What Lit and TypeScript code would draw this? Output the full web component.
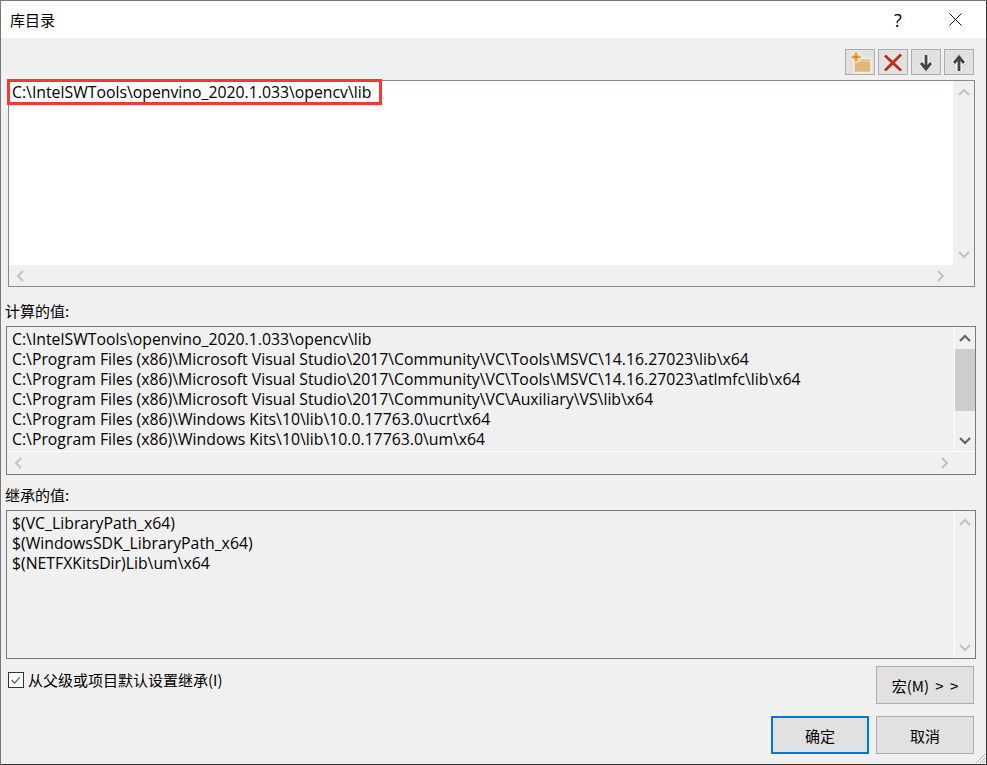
import { LitElement, html, css, svg } from "lit";
import { customElement } from "lit/decorators.js";

const chev = (dir: string, dark = false) => {
  const pts: Record<string, string> = {
    up: "1,7 6,2 11,7",
    down: "1,2 6,7 11,2",
    left: "7,1 2,6 7,11",
    right: "2,1 7,6 2,11",
  };
  const h = dir === "up" || dir === "down";
  return html`<svg class="chev" width=${h ? 12 : 9} height=${h ? 9 : 12} viewBox=${h ? "0 0 12 9" : "0 0 9 12"}>
    <polyline points=${pts[dir]} fill="none" stroke=${dark ? "#606060" : "#c2c2c2"} stroke-width="2"></polyline>
  </svg>`;
};

const computed = [
  "C:\\IntelSWTools\\openvino_2020.1.033\\opencv\\lib",
  "C:\\Program Files (x86)\\Microsoft Visual Studio\\2017\\Community\\VC\\Tools\\MSVC\\14.16.27023\\lib\\x64",
  "C:\\Program Files (x86)\\Microsoft Visual Studio\\2017\\Community\\VC\\Tools\\MSVC\\14.16.27023\\atlmfc\\lib\\x64",
  "C:\\Program Files (x86)\\Microsoft Visual Studio\\2017\\Community\\VC\\Auxiliary\\VS\\lib\\x64",
  "C:\\Program Files (x86)\\Windows Kits\\10\\lib\\10.0.17763.0\\ucrt\\x64",
  "C:\\Program Files (x86)\\Windows Kits\\10\\lib\\10.0.17763.0\\um\\x64",
];
const inherited = ["$(VC_LibraryPath_x64)", "$(WindowsSDK_LibraryPath_x64)", "$(NETFXKitsDir)Lib\\um\\x64"];

@customElement("app-root")
export class AppRoot extends LitElement {
  static styles = css`
    :host {
      display: block;
      width: 987px;
      height: 765px;
      font-family: "Open Sans", "Noto Sans CJK SC", sans-serif;
      font-size: 15.8px;
      color: #000;
    }
    .window {
      box-sizing: border-box;
      position: relative;
      width: 987px;
      height: 765px;
      display: flex;
      flex-direction: column;
      border: 1px solid #777;
      border-right-color: #333;
      border-bottom-color: #333;
      background: #f0f0f0;
    }
    .title {
      height: 37px;
      flex: none;
      background: #fff;
      display: flex;
      align-items: center;
      padding-left: 9px;
      font-family: "Noto Sans CJK SC", sans-serif;
      font-size: 15px;
    }
    .title .name { flex: 1; }
    .help { width: 14px; text-align: center; margin-right: 44px; font-family: "Open Sans", sans-serif; font-size: 18px; }
    .close { display: block; margin-right: 24px; }
    .body { flex: 1; display: flex; flex-direction: column; padding: 11px 5px 0; position: relative; }
    .toolbar { display: flex; justify-content: flex-end; gap: 3px; height: 26px; padding-right: 7px; flex: none; }
    .tbtn {
      box-sizing: border-box;
      width: 30px;
      height: 26px;
      background: #e1e1e1;
      border: 1px solid #adadad;
    }
    .tbtn svg { display: block; }
    .panel {
      box-sizing: border-box;
      border: 1px solid #7a7a7a;
      display: grid;
      flex: none;
      position: relative;
      line-height: 20px;
      white-space: nowrap;
    }
    .edit { margin: 5px 0 0 2px; width: 967px; height: 207px; grid-template-columns: 944px 1fr; grid-template-rows: 184px 1fr; border-color: #84888f; }
    .edit .content { background: #fff; padding: 1px 3px; }
    .list { width: 970px; height: 149px; grid-template-columns: 948px 1fr; }
    .list .content { padding: 2px 5px; overflow: hidden; }
    .computed { grid-template-rows: 125px 1fr; }
    .computed .content { border-right: 1px solid #fff; border-bottom: 1px solid #fff; }
    .computed .vbar { border-bottom: 1px solid #fff; }
    .inherited { grid-template-rows: 1fr; }
    .inherited .content { border-right: 1px solid #fff; }
    .row { height: 20px; }
    .vbar { display: flex; flex-direction: column; min-height: 0; }
    .vbtn { height: 22px; flex: none; display: flex; align-items: center; justify-content: center; }
    .track { flex: 1; min-height: 0; }
    .thumb { height: 62px; background: #cdcdcd; }
    .hbar { display: flex; justify-content: space-between; align-items: center; padding: 0 7px; }
    .edit .hbar { padding: 0 8px 0 7px; }
    .computed .hbar { padding: 0 6px 0 7px; }
    .label { flex: none; display: flex; align-items: flex-end; padding-bottom: 5px; margin-left: -1px; box-sizing: border-box; font-family: "Noto Sans CJK SC", sans-serif; font-size: 15px; }
    .label.l1 { height: 39px; }
    .label.l2 { height: 35px; }
    .footer { display: flex; align-items: flex-start; justify-content: space-between; padding: 7px 7px 0 2px; height: 57px; box-sizing: border-box; flex: none; }
    .check { display: flex; align-items: center; gap: 4px; margin-top: 6px; font-family: "Noto Sans CJK SC", sans-serif; font-size: 15px; line-height: 16px; }
    .box { box-sizing: border-box; width: 16px; height: 16px; border: 1px solid #333; background: #fff; display: block; }
    .btn {
      box-sizing: border-box;
      width: 98px;
      height: 38px;
      background: #e1e1e1;
      border: 1px solid #adadad;
      display: flex;
      align-items: center;
      justify-content: center;
      font-family: "Noto Sans CJK SC", sans-serif;
      font-size: 15px;
      word-spacing: 3px;
    }
    .actions { display: flex; justify-content: flex-end; gap: 7px; padding-right: 7px; }
    .btn.primary { border: 2px solid #0078d7; }
    .redbox { position: absolute; left: -2px; top: -2px; width: 375px; height: 26px; box-sizing: border-box; border: 3px solid #f33; pointer-events: none; }
    .grip { position: absolute; right: 0; bottom: 0; display: block; }
    .chev { display: block; }
  `;

  private vbar(dark: boolean, thumb = false) {
    return html`<div class="vbar">
      <div class="vbtn">${chev("up", dark)}</div>
      <div class="track">${thumb ? html`<div class="thumb"></div>` : ""}</div>
      <div class="vbtn">${chev("down", dark)}</div>
    </div>`;
  }

  private hbar() {
    return html`<div class="hbar">${chev("left")}${chev("right")}</div>`;
  }

  render() {
    return html`<div class="window">
      <div class="title">
        <span class="name">库目录</span>
        <span class="help">?</span>
        <svg class="close" width="13" height="13" viewBox="0 0 13 13">
          <path d="M.5.5l12 12M12.5.5l-12 12" stroke="#111" stroke-width="1" fill="none"></path>
        </svg>
      </div>
      <div class="body">
        <div class="toolbar">
          <div class="tbtn">
            <svg width="28" height="24" viewBox="0 0 28 24">
              <path d="M8 9.500h2l1-1h14v14H8z" fill="#dfb878" stroke="#f7f1e4" stroke-width="1.400"></path>
              <path d="M14 11h10" stroke="#efd9ae" stroke-width="1"></path>
              <circle cx="10" cy="7" r="5.500" fill="#f6efe0"></circle>
              <g fill="#eb9f3c">
                <circle cx="10" cy="4" r="1.800"></circle><circle cx="10" cy="10" r="1.800"></circle>
                <circle cx="7" cy="7" r="1.800"></circle><circle cx="13" cy="7" r="1.800"></circle>
              </g>
              <circle cx="10" cy="7" r="1.800" fill="#d07a1e"></circle>
            </svg>
          </div>
          <div class="tbtn">
            <svg width="28" height="24" viewBox="0 0 28 24">
              <path d="M6 5.500l16 15M22 4.500L6 20.500" stroke="#f5e8e4" stroke-width="6" fill="none"></path>
              <path d="M6 5.500l16 15M22 4.500L6 20.500" stroke="#b5331c" stroke-width="3" fill="none"></path>
            </svg>
          </div>
          <div class="tbtn">
            <svg width="28" height="24" viewBox="0 0 28 24">
              <path d="M10 4h8v7l4 1v4l-8 6-8-6v-4l4-1z" fill="#f2f2f2" stroke="#cfcfcf" stroke-width=".8"></path>
              <path d="M14 5v14M9 13l5 6 5-6" stroke="#454545" stroke-width="2.800" fill="none"></path>
            </svg>
          </div>
          <div class="tbtn">
            <svg width="28" height="24" viewBox="0 0 28 24">
              <path d="M10 22h8v-7l4-1v-4l-8-6-8 6v4l4 1z" fill="#f2f2f2" stroke="#cfcfcf" stroke-width=".8"></path>
              <path d="M14 21V7M9 13l5-6 5 6" stroke="#454545" stroke-width="2.800" fill="none"></path>
            </svg>
          </div>
        </div>

        <div class="panel edit">
          <div class="content">${computed[0]}</div>
          ${this.vbar(false)}
          ${this.hbar()}
          <div></div>
          <div class="redbox"></div>
        </div>

        <div class="label l1">计算的值:</div>
        <div class="panel list computed">
          <div class="content">${computed.map((t) => html`<div class="row">${t}</div>`)}</div>
          ${this.vbar(true, true)}
          ${this.hbar()}
          <div></div>
        </div>

        <div class="label l2">继承的值:</div>
        <div class="panel list inherited">
          <div class="content">${inherited.map((t) => html`<div class="row">${t}</div>`)}</div>
          ${this.vbar(false)}
        </div>

        <div class="footer">
          <div class="check">
            <svg class="box" viewBox="0 0 16 16">
              <path d="M3 8l3.500 3.500L12.500 4.500" stroke="#555" stroke-width="1.300" fill="none"></path>
            </svg>
            <span>从父级或项目默认设置继承(I)</span>
          </div>
          <div class="btn">宏(M) &gt; &gt;</div>
        </div>
        <div class="actions">
          <div class="btn primary">确定</div>
          <div class="btn">取消</div>
        </div>
      </div>
      <svg class="grip" width="12" height="12" viewBox="0 0 12 12">
        ${svg`<path d="M11 2L2 11M11 6l-5 5M11 9l-2 2" stroke="#b5b5b5" stroke-width="1" fill="none"></path>`}
      </svg>
    </div>`;
  }
}
